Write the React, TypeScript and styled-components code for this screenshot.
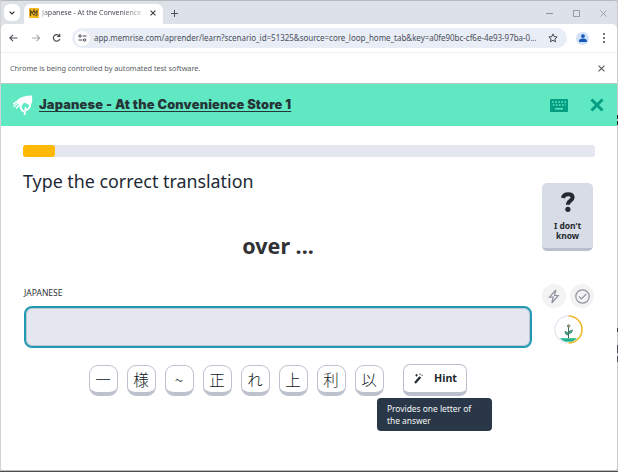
import React from "react";
import styled, { createGlobalStyle } from "styled-components";

const Global = createGlobalStyle`
  * { box-sizing: border-box; }
  html, body { margin: 0; background: #d3d4d7; overflow: hidden; }
  body { font-family: "Noto Sans", "Open Sans", "Noto Sans CJK JP", sans-serif; color: #303238; }
  button, input { font: inherit; color: inherit; }
`;

const Desktop = styled.div`
  position: relative;
  width: 618px;
  height: 472px;
  background: #c9cbcf;
  border-bottom: 1px solid #4b4c50;
`;
const BrowserWindow = styled.div`
  width: 617px;
  height: 471px;
  display: flex;
  flex-direction: column;
  background: #fff;
  border: 1px solid #d2d3d6;
  border-top-color: #b5b9bf;
  border-bottom-color: #b9babd;
  border-right-width: 0;
  border-radius: 4px 4px 3px 3px;
  overflow: hidden;
`;
const Behind = styled.i<{ $y: number; $h: number; $c: string }>`
  position: absolute;
  right: 0;
  top: ${(p) => p.$y}px;
  width: 1px;
  height: ${(p) => p.$h}px;
  background: ${(p) => p.$c};
`;
const TabStrip = styled.div`
  height: 23px;
  flex: none;
  display: flex;
  background: #dde1e8;
  padding: 3px 0 0 3px;
`;
const TabSearch = styled.div`
  width: 16px;
  height: 17px;
  border-radius: 6px;
  background: #fff;
  display: grid;
  place-items: center;
`;
const Tab = styled.div`
  margin-left: 4px;
  width: 139px;
  height: 20px;
  padding: 0 7px 2px 5px;
  display: flex;
  align-items: center;
  justify-content: space-between;
  background: #fff;
  border-radius: 6px 6px 0 0;
`;
const TabTitle = styled.span`
  width: 105px;
  white-space: nowrap;
  font: 7px/12px "Noto Sans", sans-serif;
  color: #444a52;
  mask-image: linear-gradient(90deg, rgba(0,0,0,.5), #000 8px, #000 78px, rgba(0,0,0,.25) 101px);
`;
const NewTab = styled.div`
  width: 22px;
  height: 18px;
  display: grid;
  place-items: center;
`;
const WindowButtons = styled.div`
  margin-left: auto;
  margin-right: 10px;
  height: 18px;
  display: flex;
  align-items: center;
  gap: 20px;
`;
const ToolbarBack = styled.div`
  height: 28px;
  flex: none;
  background: #dde1e8;
`;
const Toolbar = styled.div`
  height: 28px;
  padding-left: 7px;
  display: flex;
  align-items: center;
  background: #fff;
  border-radius: 5px 5px 0 0;
`;
const NavButtons = styled.div`
  width: 64px;
  flex: none;
  display: flex;
  gap: 9.5px;
`;
const AddressBar = styled.div`
  width: 495px;
  flex: none;
  height: 20px;
  padding: 0 9px 0 3px;
  border-radius: 10px;
  background: #e9edf6;
  display: flex;
  align-items: center;
`;
const SiteInfo = styled.div`
  width: 15px;
  height: 15px;
  flex: none;
  border-radius: 50%;
  background: #fff;
  display: grid;
  place-items: center;
`;
const Url = styled.span`
  flex: 1;
  margin-left: 4px;
  white-space: nowrap;
  font: 8px/14px "Noto Sans", sans-serif;
  letter-spacing: -0.03px;
  color: #4a505b;
`;
const Avatar = styled.div`
  margin-left: 9px;
  width: 13px;
  height: 13px;
  border-radius: 50%;
  background: #cfe1f8;
  display: grid;
  place-items: center;
`;
const MenuDots = styled.div`
  margin-left: 14px;
  display: grid;
  gap: 2px;
  i { width: 2px; height: 2px; background: #44474c; border-radius: 1px; }
`;
const InfoBar = styled.div`
  height: 32px;
  flex: none;
  padding: 0 12px 0 9px;
  display: flex;
  align-items: center;
  justify-content: space-between;
  border-top: 1px solid #eef0f3;
  border-bottom: 1px solid #bccbc8;
  font-size: 7.35px;
  color: #596064;
`;
const InfoText = styled.span`
  letter-spacing: -0.03px;
`;
const Header = styled.header`
  height: 42px;
  flex: none;
  display: flex;
  align-items: center;
  padding: 0 13px 0 11px;
  background: #5fe8c2;
`;
const Course = styled.a`
  margin: 0 auto 1px 6px;
  font: 900 12.8px/18px Inter, sans-serif;
  letter-spacing: 0.19px;
  color: #263538;
  white-space: nowrap;
  text-decoration: underline;
  text-decoration-thickness: 1px;
  text-underline-offset: 2px;
  text-decoration-skip-ink: none;
`;
const HeaderActions = styled.div`
  display: flex;
  align-items: center;
  gap: 22px;
`;
const Page = styled.main`
  flex: 1;
  padding: 19px 22px 0 22px;
`;
const Progress = styled.div`
  height: 12px;
  width: 572px;
  background: #e4e7ef;
  border-radius: 3px;
`;
const ProgressFill = styled.div`
  height: 12px;
  width: 32px;
  background: #ffb904;
  border-radius: 3px;
`;
const Question = styled.section`
  display: flex;
  justify-content: space-between;
  height: 126px;
  padding-right: 2px;
`;
const Prompt = styled.div`
  width: 510px;
`;
const Instruction = styled.h1`
  margin: 11px 0 0;
  font-weight: 400;
  font-size: 17.85px;
  line-height: 27px;
  letter-spacing: 0;
  color: #1d2a36;
`;
const Phrase = styled.h2`
  margin: 37px 0 0;
  text-align: center;
  font-weight: 700;
  font-size: 21.5px;
  line-height: 28px;
  color: #303135;
`;
const Skip = styled.button`
  margin: 26px 0 0;
  padding: 9px 0 0;
  width: 51px;
  height: 68px;
  border: 0;
  border-bottom: 3px solid #b9bfca;
  border-radius: 5px;
  background: #d7dce6;
  display: flex;
  flex-direction: column;
  align-items: center;
  font-weight: 700;
  font-size: 8.5px;
  line-height: 10px;
  color: #26292f;
  svg { margin-bottom: 9px; flex: none; }
`;
const Answer = styled.section`
  display: flex;
`;
const Field = styled.label`
  display: block;
  width: 510px;
  font-size: 8.5px;
  line-height: 12px;
  color: #303238;
`;
const Caption = styled.span`
  display: block;
  margin: 4px 0 0 1px;
`;
const AnswerInput = styled.input`
  display: block;
  width: 508px;
  height: 42px;
  margin: 7px 0 0 1px;
  border: 2px solid #2299b3;
  border-radius: 8px;
  background: #e4e7ef;
  box-shadow: inset 0 0 0 1px #bcc8d4;
  outline: none;
`;
const Status = styled.div`
  width: 56px;
  margin: 1px 0 0 9px;
  display: flex;
  flex-wrap: wrap;
  justify-content: center;
  align-content: flex-start;
  gap: 7px 4px;
`;
const Badge = styled.div`
  width: 24px;
  height: 24px;
  border-radius: 50%;
  background: #f3f3f4;
  display: grid;
  place-items: center;
`;
const Keyboard = styled.div`
  display: flex;
  padding: 16px 0 0 65.5px;
  gap: 9px;
`;
const Key = styled.button`
  width: 29px;
  height: 31px;
  margin-top: 1px;
  padding: 0;
  border: 1px solid #bdc2ce;
  border-bottom-width: 4px;
  border-radius: 9px;
  background: #fff;
  font: 300 15.5px/24px "Noto Sans CJK JP", sans-serif;
  color: #0c1620;
  display: flex;
  align-items: center;
  justify-content: center;
`;
const HintWrap = styled.div`
  position: relative;
  margin-left: 10.5px;
`;
const HintButton = styled.button`
  width: 64px;
  height: 32px;
  padding: 0 9px 1px 10px;
  border: 1px solid #bbc1cc;
  border-bottom-width: 4px;
  border-radius: 7px;
  background: #fff;
  display: flex;
  align-items: center;
  justify-content: space-between;
  font-weight: 700;
  font-size: 10.7px;
  line-height: 16px;
  color: #22272d;
`;
const Tooltip = styled.div`
  position: absolute;
  left: -26px;
  top: 34px;
  width: 115px;
  height: 33px;
  padding: 5px 0 0 10px;
  border-radius: 4px;
  background: #293748;
  color: #f6f7f8;
  font-size: 8.4px;
  line-height: 12px;
  white-space: nowrap;
`;

const keys = ["一", "様", "~", "正", "れ", "上", "利", "以"];

const Cross = ({ size, color, width = 1 }: { size: number; color: string; width?: number }) => (
  <svg width={size} height={size} viewBox={`0 0 ${size} ${size}`} stroke={color} strokeWidth={width}>
    <path d={`M${width / 2} ${width / 2}L${size - width / 2} ${size - width / 2}M${size - width / 2} ${width / 2}L${width / 2} ${size - width / 2}`} />
  </svg>
);

const Favicon = () => (
  <svg width="10" height="10" viewBox="0 0 10 10">
    <rect width="10" height="10" rx="1" fill="#f5b91d" />
    <path d="M1.5 8V2.5L3.5 5 5 2l1 3 2.5-3M2 4l3 3 3-4v4L6.5 8" fill="none" stroke="#5b4922" strokeWidth="1.1" />
  </svg>
);

const Hand = () => (
  <svg width="21" height="21" viewBox="0 0 21 21">
    <path d="M5.500 4.500C9 2 12 1.500 15.500.8L19.500.6C20.600 2 20.300 5 20 7L18.500 11 15.500 9 12.500 7.800 10 9.500 6 9z" fill="#fff" />
    <g fill="none" stroke="#fff" strokeLinecap="round" strokeLinejoin="round">
      <path d="M7.500 4.800 1.500 8.800M8 6.500 2 11.500M9.500 8 4.500 13" strokeWidth="1.600" />
      <path d="M10 8.500 8.500 12 9.800 15 11.200 16.200" strokeWidth="1.900" />
      <path d="M18.300 8.500C18.200 12 16.500 14.500 14.200 15.200M13.500 13 13.300 16 12.500 19.200" strokeWidth="1.900" />
    </g>
  </svg>
);

const KeyboardIcon = () => (
  <svg width="18" height="13" viewBox="0 0 18 13">
    <rect width="18" height="13" rx="1" fill="#059e83" />
    <g stroke="#5fe8c2" strokeWidth="1.5">
      <path d="M2 3h14" strokeDasharray="1.6 1.5" />
      <path d="M2.800 6h13" strokeDasharray="1.600 1.5" />
      <path d="M5 9.800h8" />
    </g>
  </svg>
);

const Plant = () => (
  <svg width="29" height="29" viewBox="0 0 29 29" fill="none">
    <path d="M14.500 1a13.500 13.500 0 0 0 0 27" stroke="#e6e8ef" strokeWidth="1.4" />
    <path d="M14.500 1a13.500 13.500 0 0 1 0 27" stroke="#edb82b" strokeWidth="1.6" />
    <path d="M6 23.200h17c-2 2.500-5 3.600-8.500 3.600S8 25.700 6 23.200z" fill="#20b58c" />
    <path d="M14.500 23.200V11" stroke="#41675d" />
    <path d="M14.300 20c-2.200 0-3.300-1.300-3.300-3.400 2.100 0 3.300 1.100 3.300 3.400zM14.700 18.500c0-2.200 1.300-3.400 3.700-3.400 0 2.200-1.300 3.400-3.700 3.400z" fill="#35b78f" stroke="#39685b" strokeWidth=".7" />
    <circle cx="14.600" cy="11" r="1.300" fill="#e57b51" stroke="#52907b" strokeWidth=".8" />
  </svg>
);

export default function App() {
  return (
    <Desktop>
      <Global />
      <BrowserWindow>
        <TabStrip>
          <TabSearch>
            <svg width="6" height="4" viewBox="0 0 6 4" fill="none" stroke="#2f3236" strokeWidth="1.2"><path d="m.6.6 2.400 2.400L5.400.6" /></svg>
          </TabSearch>
          <Tab>
            <Favicon />
            <TabTitle>Japanese - At the Convenience</TabTitle>
            <Cross size={6} color="#3c4047" width={1.1} />
          </Tab>
          <NewTab>
            <svg width="7" height="7" stroke="#4c5158"><path d="M3.500 0v7M0 3.500h7" /></svg>
          </NewTab>
          <WindowButtons>
            <svg width="7" height="7" stroke="#8d9197"><path d="M0 3.500h7" /></svg>
            <svg width="7" height="7" stroke="#999da3" fill="none"><path d="M.5.5h6v6h-6z" /></svg>
            <Cross size={7} color="#8d9197" width={0.8} />
          </WindowButtons>
        </TabStrip>
        <ToolbarBack>
          <Toolbar>
            <NavButtons>
              <svg width="12" height="10" viewBox="0 0 12 10" fill="none" stroke="#4b4f55" strokeWidth="1.100"><path d="M9.500 5H2.200M5 1.800 1.800 5 5 8.200" /></svg>
              <svg width="12" height="10" viewBox="0 0 12 10" fill="none" stroke="#a6a9ad" strokeWidth="1.100"><path d="M2 5h7.500M6.500 1.800 9.700 5 6.500 8.200" /></svg>
              <svg width="11" height="10" viewBox="0 0 11 10" fill="none" stroke="#4b4f55" strokeWidth="1.200"><path d="M8.300 2.800A3.300 3.300 0 1 0 8.800 6M8.700.8v2.700H6" /></svg>
            </NavButtons>
            <AddressBar>
              <SiteInfo>
                <svg width="9" height="8" viewBox="0 0 9 8" fill="none" stroke="#44484f"><circle cx="2" cy="2" r="1.200" /><path d="M4.500 2h4M.5 6h4" /><circle cx="6.700" cy="6" r="1.200" /></svg>
              </SiteInfo>
              <Url>app.memrise.com/aprender/learn?scenario_id=51325&amp;source=core_loop_home_tab&amp;key=a0fe90bc-cf6e-4e93-97ba-0...</Url>
              <svg width="10" height="10" viewBox="0 0 10 10" fill="none" stroke="#464a50" strokeWidth="1"><path d="m5 .9 1.200 2.700 2.900.3-2.200 2 .6 2.900L5 7.300 2.500 8.800l.6-2.900-2.200-2 2.900-.3z" /></svg>
            </AddressBar>
            <Avatar>
              <svg width="8" height="8" viewBox="0 0 8 8" fill="#1757b7"><circle cx="4" cy="2.100" r="1.900" /><path d="M0 8V6.500C.5 5 2.500 4.600 4 4.600s3.500.4 4 1.900V8z" /></svg>
            </Avatar>
            <MenuDots><i /><i /><i /></MenuDots>
          </Toolbar>
        </ToolbarBack>
        <InfoBar>
          <InfoText>Chrome is being controlled by automated test software.</InfoText>
          <Cross size={7} color="#555a60" width={1.1} />
        </InfoBar>
        <Header>
          <Hand />
          <Course>Japanese - At the Convenience Store 1</Course>
          <HeaderActions>
            <KeyboardIcon />
            <Cross size={14} color="#059e83" width={3} />
          </HeaderActions>
        </Header>
        <Page>
          <Progress><ProgressFill /></Progress>
          <Question>
            <Prompt>
              <Instruction>Type the correct translation</Instruction>
              <Phrase>over ...</Phrase>
            </Prompt>
            <Skip>
              <svg width="14" height="20" viewBox="0 0 14 20" fill="none" stroke="#26292f" strokeWidth="4"><path d="M1.800 6C2.500 2.800 4.800 2.200 7.200 2.200c2.600 0 4.400 1.200 4.400 3.400 0 3.200-4.700 3-4.700 7.200" /><circle cx="6.900" cy="17.300" r="2.600" fill="#26292f" stroke="none" /></svg>
              <span>I don’t<br />know</span>
            </Skip>
          </Question>
          <Answer>
            <Field>
              <Caption>JAPANESE</Caption>
              <AnswerInput />
            </Field>
            <Status>
              <Badge>
                <svg width="12" height="15" viewBox="0 0 12 15" fill="none" stroke="#9093a1" strokeWidth="1.200"><path d="M7.800 1 1.500 8.200h3.700L3.800 14l6.500-7.500H6.600z" /></svg>
              </Badge>
              <Badge>
                <svg width="15" height="15" viewBox="0 0 15 15" fill="none" stroke="#8f93a0" strokeWidth="1.200"><circle cx="7.500" cy="7.500" r="6.700" /><path d="m4 7.500 2.500 2.500 4.700-5" /></svg>
              </Badge>
              <Plant />
            </Status>
          </Answer>
          <Keyboard>
            {keys.map((k) => <Key key={k}>{k}</Key>)}
            <HintWrap>
              <HintButton>
                <svg width="9" height="11" viewBox="0 0 9 11" fill="none" stroke="#252c35"><path d="M1 10 6 4.300" strokeWidth="2.300" /><path d="M5.700 3.500 7 5M2.500 1v2.500M1.200 2.200h2.600M6 .5v1.500M7.500 2.200h1.300" strokeWidth=".9" /></svg>
                Hint
              </HintButton>
              <Tooltip>Provides one letter of<br />the answer</Tooltip>
            </HintWrap>
          </Keyboard>
        </Page>
      </BrowserWindow>
      <Behind $y={115} $h={4} $c="#222" />
      <Behind $y={121} $h={4} $c="#222" />
      <Behind $y={328} $h={4} $c="#3b3d44" />
      <Behind $y={345} $h={8} $c="#4b5063" />
      <Behind $y={356} $h={6} $c="#4b5063" />
    </Desktop>
  );
}
